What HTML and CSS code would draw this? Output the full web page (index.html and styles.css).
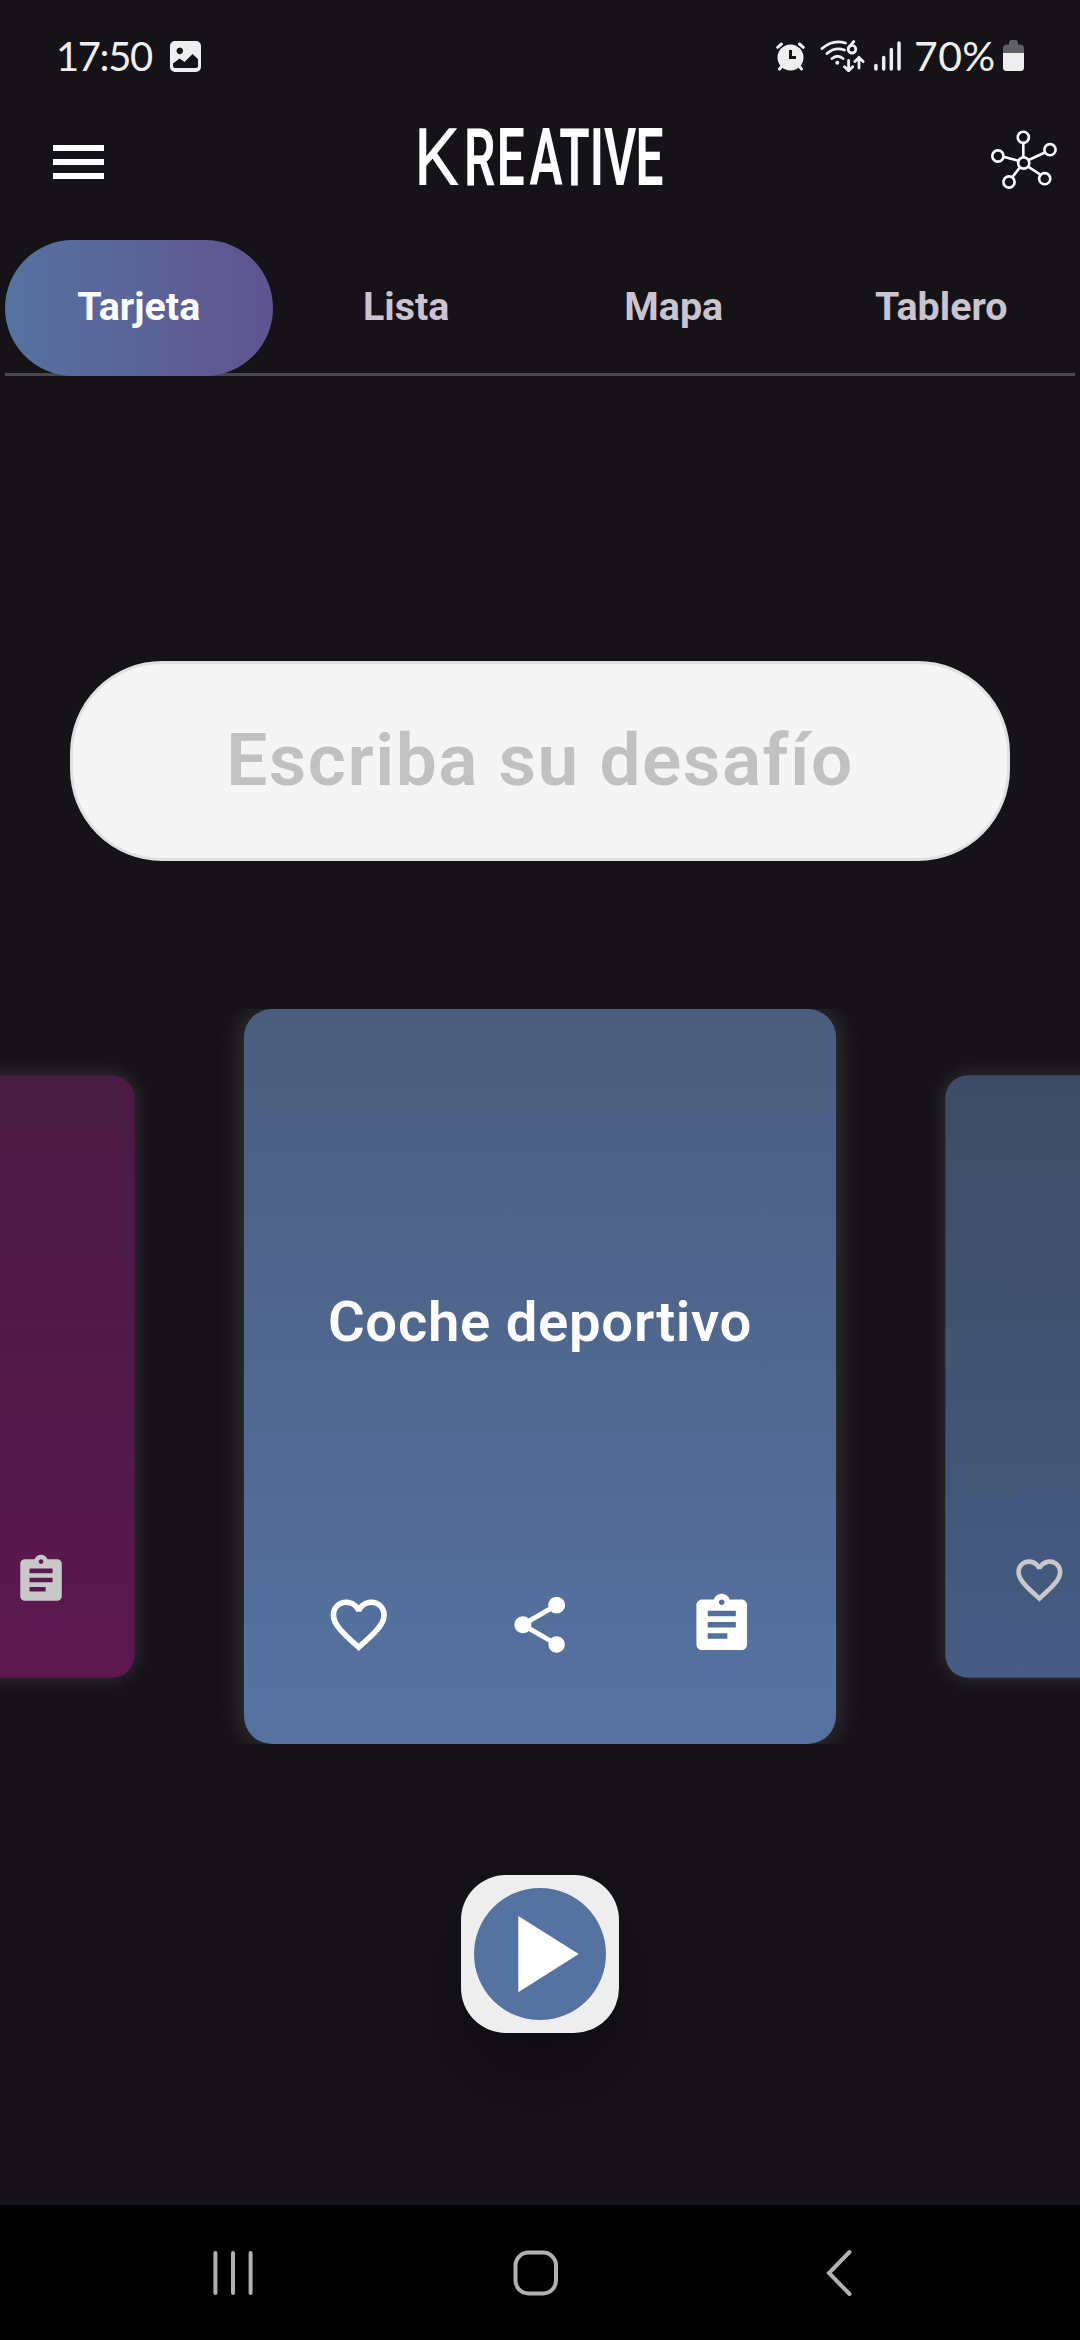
FILE: index.html
```html
<!DOCTYPE html>
<html lang="es">
<head>
<meta charset="utf-8">
<title>Kreative</title>
<link rel="stylesheet" href="styles.css">
</head>
<body>
<svg class="sprite" aria-hidden="true">
  <symbol id="heart" viewBox="0 0 24 24"><path d="M16.5 3c-1.74 0-3.41.81-4.5 2.09C10.91 3.81 9.24 3 7.5 3 4.42 3 2 5.42 2 8.5c0 3.78 3.4 6.86 8.55 11.54L12 21.35l1.45-1.32C18.6 15.36 22 12.28 22 8.5 22 5.42 19.58 3 16.5 3zm-4.4 15.55l-.1.1-.1-.1C7.14 14.24 4 11.39 4 8.5 4 6.5 5.5 5 7.5 5c1.54 0 3.04.99 3.57 2.36h1.87C13.46 5.99 14.96 5 16.5 5c2 0 3.5 1.5 3.5 3.500 0 2.890-3.140 5.740-7.900 10.050z"/></symbol>
  <symbol id="share" viewBox="0 0 24 24"><path d="M18 16.080c-.76 0-1.440.3-1.960.77L8.910 12.700c.05-.23.09-.46.09-.7s-.04-.47-.09-.7l7.050-4.110c.54.5 1.250.81 2.040.81 1.660 0 3-1.340 3-3s-1.340-3-3-3-3 1.340-3 3c0 .24.04.47.09.7L8.040 9.810C7.500 9.310 6.790 9 6 9c-1.660 0-3 1.340-3 3s1.340 3 3 3c.79 0 1.500-.31 2.040-.81l7.120 4.160c-.05.21-.08.43-.08.65 0 1.610 1.310 2.920 2.920 2.920s2.920-1.310 2.920-2.920-1.310-2.920-2.920-2.920z"/></symbol>
  <symbol id="clip" viewBox="0 0 24 24"><path d="M19 3h-4.180C14.400 1.840 13.300 1 12 1s-2.400.84-2.820 2H5c-1.100 0-2 .9-2 2v14c0 1.100.9 2 2 2h14c1.100 0 2-.9 2-2V5c0-1.100-.9-2-2-2zm-7 0c.55 0 1 .45 1 1s-.45 1-1 1-1-.45-1-1 .45-1 1-1zm2 14H7v-2h7v2zm3-4H7v-2h10v2zm0-4H7V7h10v2z"/></symbol>
</svg>

<div class="statusbar">
  <span class="clock">17:50</span>
  <svg class="st-image" viewBox="0 0 31 31"><path fill="#eee" fill-rule="evenodd" d="M5 0h21a5 5 0 0 1 5 5v21a5 5 0 0 1-5 5H5a5 5 0 0 1-5-5V5a5 5 0 0 1 5-5zM3 22.500v2.500a2 2 0 0 0 2 2h21a2 2 0 0 0 2-2v-7l-5.500-5-8 8-5-3.500zM9.800 6.600a3.300 3.300 0 1 0 .01 0z"/></svg>
  <span class="spacer"></span>
  <svg class="st-alarm" viewBox="0 0 29 29"><g stroke="#eee" stroke-width="3" stroke-linecap="round"><path d="M1.700 5.300 5.500 2M27.300 5.300 23.500 2M6 24l-2.500 3M23 24l2.500 3"/></g><circle cx="14.500" cy="15.500" r="13" fill="#eee"/><path d="M14.500 8v7.500h5.500" fill="none" stroke="#151218" stroke-width="3"/></svg>
  <svg class="st-wifi" viewBox="0 0 45 32"><g fill="none" stroke="#eee" stroke-width="2.800" stroke-linecap="round"><path d="M2 8.500Q13 -1 25.500 3M7 13.500Q15 6.500 24.500 10M12 18.500q5.500-4.500 11 0M28.600 20.500v10M24.500 26.800l4.100 4 4.100-4M39 28V17.500M34.900 21.500l4.100-4 4.100 4"/><circle cx="32" cy="9.200" r="3.800"/><path d="M33.800 1.500 29 7.200"/></g><circle cx="17.300" cy="22.700" r="2" fill="#eee"/></svg>
  <svg class="st-signal" viewBox="0 0 27 30"><path d="M1.900 24.500V28M9.700 16.500V28M17.300 8.500V28M25 2V28" stroke="#eee" stroke-width="3.500" stroke-linecap="round"/></svg>
  <span class="percent">70%</span>
  <svg class="st-battery" viewBox="0 0 21 32"><path d="M0 13V8.500Q0 4.500 4 4.500H6V2.500Q6 0 8.500 0h4Q15 0 15 2.500v2h2q4 0 4 4V13z" fill="#615f65"/><path d="M0 13h21v14.500q0 3.500-3.500 3.500h-14Q0 31 0 27.500z" fill="#eee"/></svg>
</div>

<header class="topbar">
  <svg class="menu" viewBox="0 0 51 35"><path d="M0 3h51M0 17h51M0 31h51" stroke="#fff" stroke-width="6"/></svg>
  <svg class="wordmark" viewBox="0 0 246 64"><text class="initial" transform="translate(0 60) scale(.9 1)" x="-5" y="0">K</text><text transform="translate(0 60) scale(.62 1)" y="0" x="74 127 180 228 277 300 351">REATIVE</text></svg>
  <svg class="network" viewBox="0 0 66 60"><g fill="none" stroke="#fff" stroke-width="2.600"><path d="M32.300 13.500V27M26.500 30.500 12.500 26.800M38.200 29.800 54 22.500M28.800 37.500 21.800 46.500M37.500 36.800 49.200 44.500"/><circle cx="32.300" cy="7.300" r="5.600"/><circle cx="59" cy="19.700" r="5.600"/><circle cx="6.900" cy="26" r="5.600"/><circle cx="32.700" cy="33" r="5.600"/><circle cx="53.700" cy="48.700" r="5.600"/><circle cx="18" cy="52" r="5.600"/></g></svg>
</header>

<nav class="tabs">
  <div class="tab active">Tarjeta</div>
  <div class="tab">Lista</div>
  <div class="tab">Mapa</div>
  <div class="tab">Tablero</div>
</nav>

<div class="challenge">Escriba su desafío</div>

<section class="carousel">
  <article class="card side plum">
    <div class="title"></div>
    <div class="actions"><svg><use href="#heart"/></svg><svg><use href="#share"/></svg><svg><use href="#clip"/></svg></div>
  </article>
  <article class="card">
    <div class="title">Coche deportivo</div>
    <div class="actions"><svg><use href="#heart"/></svg><svg><use href="#share"/></svg><svg><use href="#clip"/></svg></div>
  </article>
  <article class="card side navy">
    <div class="title"></div>
    <div class="actions"><svg><use href="#heart"/></svg><svg><use href="#share"/></svg><svg><use href="#clip"/></svg></div>
  </article>
</section>

<div class="play">
  <svg viewBox="0 0 132 132"><circle cx="66" cy="66" r="66" fill="#5573a0"/><path d="M44.300 28v76.300L104.700 66z" fill="#fff"/></svg>
</div>

<footer class="navbar">
  <svg class="recents" viewBox="0 0 40 46"><path d="M2.400 3v40M20 3v40M37.600 3v40"/></svg>
  <svg class="home" viewBox="0 0 46 46"><rect x="2.500" y="2.500" width="40.500" height="41" rx="13"/></svg>
  <svg class="back" viewBox="0 0 26 48"><path d="M23.500 3 3 24l20.500 21"/></svg>
</footer>
</body>
</html>
```
FILE: styles.css
```css
* { box-sizing: border-box; }

body {
  margin: 0;
  width: 1080px;
  height: 2340px;
  overflow: hidden;
  display: flex;
  flex-direction: column;
  background: #151218;
  color: #fff;
  font-family: Roboto, "Liberation Sans", sans-serif;
}

svg { display: block; flex: none; }
.sprite { display: none; }

.statusbar {
  height: 112px;
  display: flex;
  align-items: center;
  padding: 0 56px 0 56px;
  font: 40px/48px Lato, sans-serif;
  color: #eee;
}
.clock { width: 114px; letter-spacing: -1.4px; }
.percent { width: 89px; margin-left: 13px; font-size: 41px; letter-spacing: 0.4px; }
.spacer { flex: 1; }
.st-image { width: 31px; height: 31px; }
.st-alarm { width: 29px; height: 29px; margin-right: 15px; }
.st-wifi { width: 45px; height: 32px; margin-right: 9px; }
.st-signal { width: 27px; height: 30px; }
.st-battery { width: 21px; height: 32px; }

.topbar {
  height: 128px;
  display: flex;
  align-items: flex-start;
  justify-content: space-between;
  padding: 0 23px 0 53px;
}
.menu { width: 51px; height: 35px; margin-top: 33px; }
.wordmark { width: 246px; height: 64px; margin: 13px 0 0 -13px; overflow: visible; }
.wordmark text { font: 600 80px Roboto, sans-serif; fill: #fff; }
.wordmark .initial { font-weight: 450; }
.network { width: 66px; height: 60px; margin-top: 18px; }

.tabs {
  height: 136px;
  margin: 0 5px;
  display: flex;
  background: linear-gradient(#49474e, #49474e) bottom / 100% 3px no-repeat;
}
.tab {
  flex: 1;
  display: flex;
  align-items: center;
  justify-content: center;
  padding-bottom: 3px;
  border-radius: 68px;
  font-size: 39.4px;
  font-weight: 700;
  color: #cac4d0;
}
.tab.active { color: #fff; background: linear-gradient(90deg, #5573a0, #5f5490); }

.challenge {
  margin: 285px 70px 0;
  height: 200px;
  flex: none;
  display: flex;
  align-items: center;
  justify-content: center;
  padding-bottom: 3px;
  background: #f5f5f5;
  border: 3px solid #e0e0e0;
  border-radius: 92px;
  font-size: 73px;
  font-weight: 560;
  letter-spacing: 1.5px;
  color: #c1c1c1;
}

.carousel {
  height: 735px;
  flex: none;
  margin-top: 148px;
  display: flex;
  justify-content: center;
  align-items: center;
  gap: 56px;
  overflow: hidden;
}
.card {
  width: 592px;
  height: 735px;
  flex: none;
  display: flex;
  flex-direction: column;
  border-radius: 28px;
  background: linear-gradient(#4b5d7e, #5573a2);
  box-shadow: 0 0 24px 1px #3a3a3a;
}
.side { transform: scale(.82); box-shadow: 0 0 24px 0 #343436; }
.plum { background: linear-gradient(#4a1c44, #5c1850); }
.navy { background: linear-gradient(#3e4b65, #455c83); }
.title {
  height: 582px;
  padding-top: 44px;
  display: flex;
  align-items: center;
  justify-content: center;
  font-size: 56.250px;
  font-weight: 560;
  letter-spacing: 0.7px;
}
.actions {
  display: flex;
  justify-content: space-around;
  padding: 0 24px;
}
.actions svg { width: 67.500px; height: 67.500px; fill: #fff; }
.side .actions svg { fill: #c8c8c9; }

.play {
  width: 158px;
  height: 158px;
  flex: none;
  margin: 131px auto 0;
  display: flex;
  align-items: center;
  justify-content: center;
  background: #eee;
  border-radius: 45px;
  box-shadow: 0 45px 68px rgba(0, 0, 0, .27);
}
.play svg { width: 132px; height: 132px; }

.navbar {
  height: 135px;
  flex: none;
  margin-top: auto;
  display: flex;
  align-items: center;
  justify-content: space-between;
  padding: 0 228px 0 213px;
  background: #000;
}
.navbar svg { fill: none; stroke: #b1b1b1; stroke-width: 4; stroke-linecap: round; }
.recents { width: 40px; height: 46px; }
.home { width: 46px; height: 46px; margin-left: -8px; }
.back { width: 26px; height: 48px; }
```
